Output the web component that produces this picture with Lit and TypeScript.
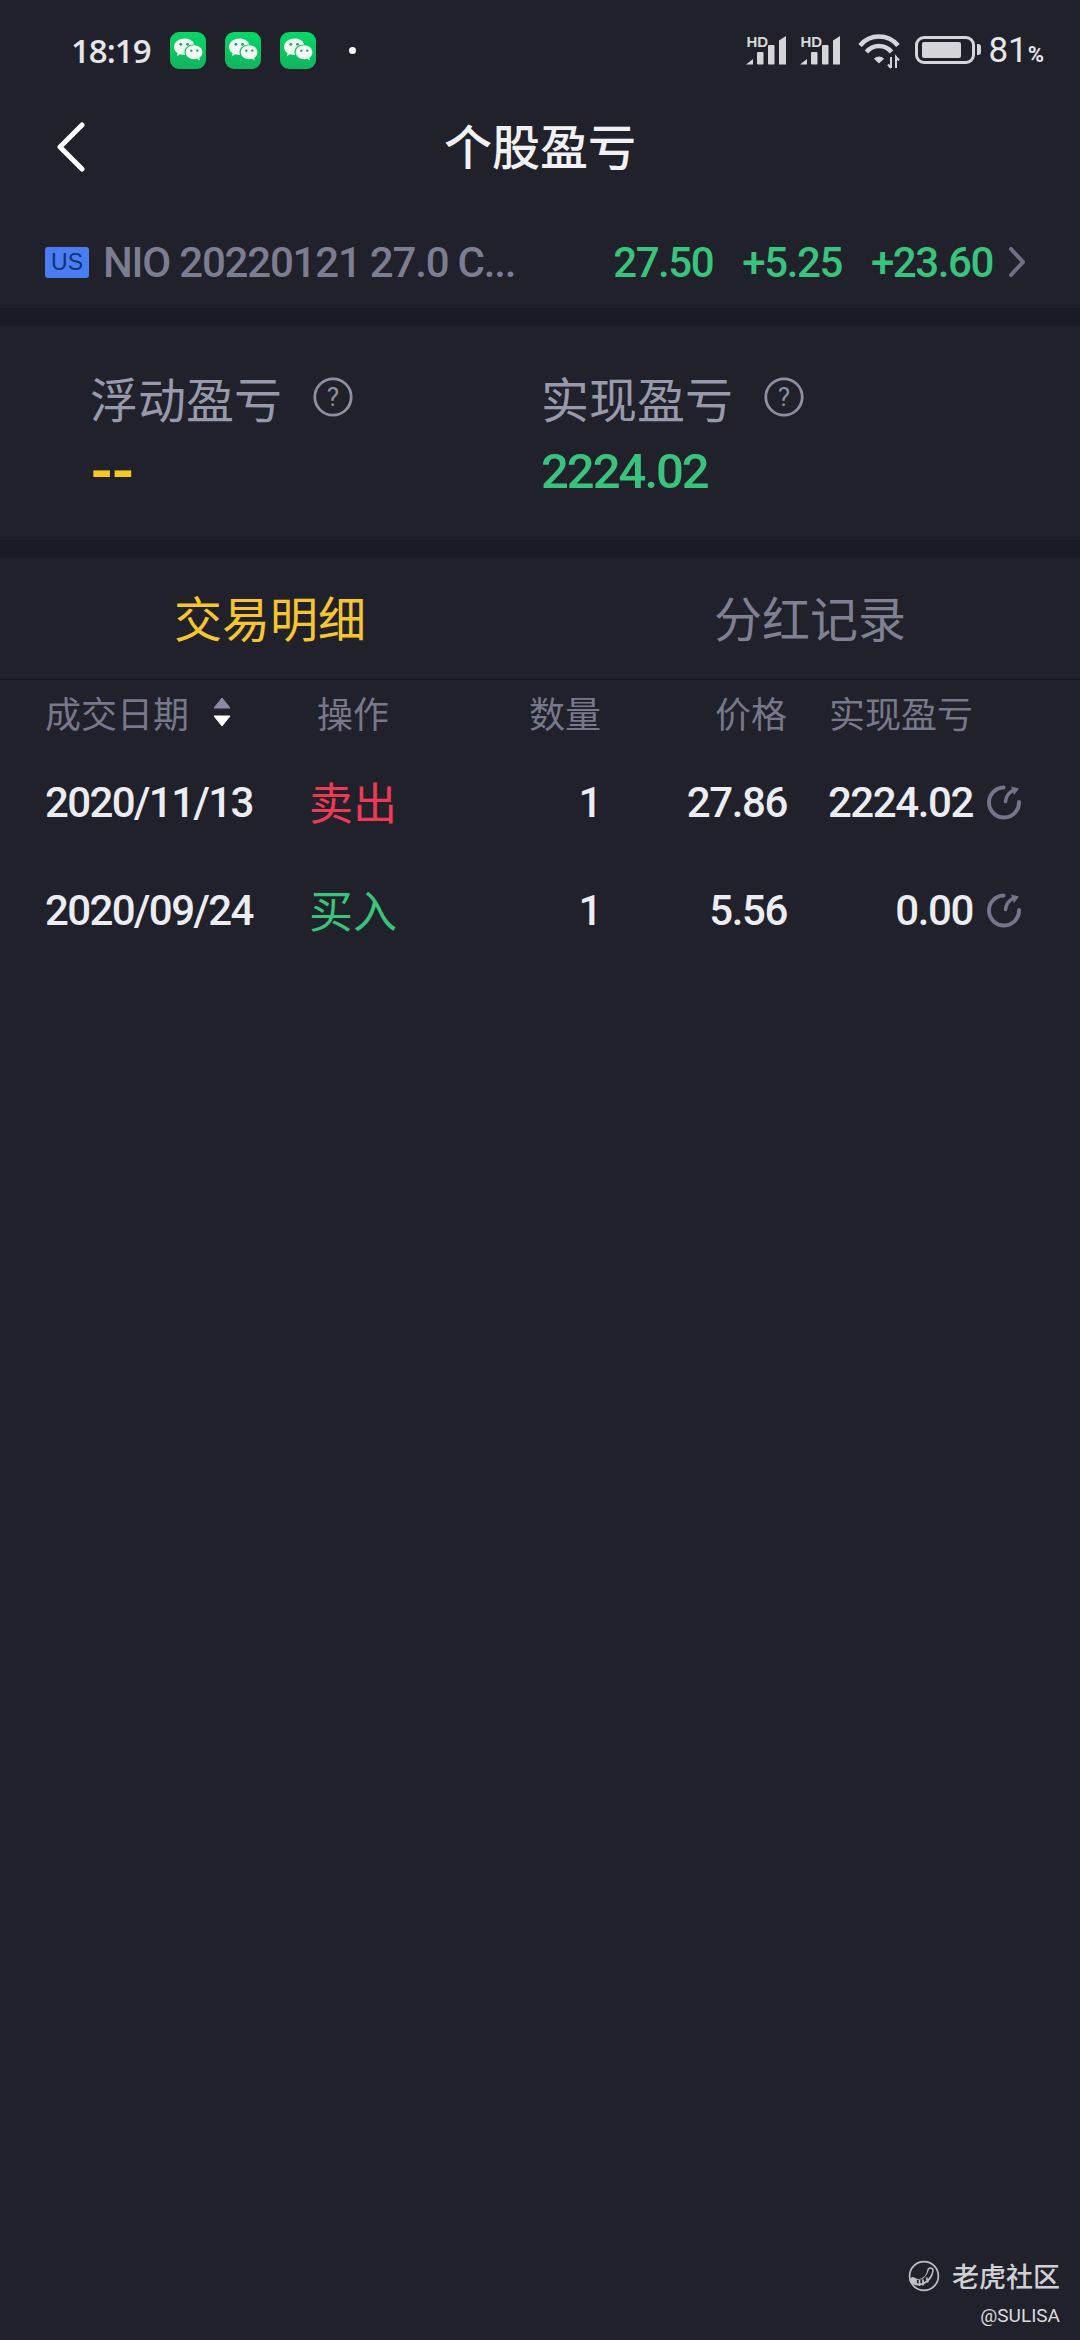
import { LitElement, html, css } from "lit";
import { customElement } from "lit/decorators.js";

const wechat = html`<svg class="wx" viewBox="0 0 36 37">
  <defs><linearGradient id="wxg" x1="0" y1="0" x2="0" y2="1"><stop offset="0" stop-color="#06d867"/><stop offset="1" stop-color="#12b45e"/></linearGradient></defs>
  <rect width="36" height="37" rx="9" fill="url(#wxg)"/>
  <path d="M14.500 6.500c-6 0-10.500 3.800-10.500 8.500 0 2.600 1.400 4.700 3.600 6.200l-.7 2.900 3.200-1.800c1.300.4 2.800.6 4.200.6l.8 0c-.4-1-.6-1.900-.6-2.900 0-4.300 4-7.600 9-7.600l.6 0C23.600 9 19.300 6.500 14.500 6.500z" fill="#eefaf2"/>
  <path d="M24.300 13.200c-4.700 0-8.600 3.100-8.600 7s3.900 7 8.600 7c1 0 2-.1 2.900-.4l2.700 1.600-.6-2.600c1.900-1.300 3.100-3.300 3.100-5.600 0-3.900-3.600-7-8.100-7z" fill="#eefaf2"/>
  <circle cx="10.800" cy="12.300" r="1.400" fill="#2d9a62"/><circle cx="17.500" cy="12.300" r="1.400" fill="#2d9a62"/>
  <circle cx="21.300" cy="18.600" r="1.200" fill="#2d9a62"/><circle cx="27.300" cy="18.600" r="1.200" fill="#2d9a62"/>
</svg>`;

const signal = html`<span class="sig"><span class="hd">HD</span><svg viewBox="0 0 42 30" class="sigbars">
  <path d="M1 29.500 8 24V29.500z" fill="#d6d6da"/><rect x="12" y="17" width="6.500" height="12.500" rx="1" fill="#d6d6da"/><rect x="23" y="10" width="6.500" height="19.500" rx="1" fill="#d6d6da"/><path d="M34 5.500 41 1V29.500H34z" fill="#d6d6da"/>
</svg></span>`;

const wifi = html`<svg class="wifi" viewBox="0 0 42 35" fill="none" stroke="#d6d6da">
  <path d="M2 11.500C12-.5 30-.5 40 11.500" stroke-width="4.500"/>
  <path d="M8.500 18C15 10 27 10 33.500 18" stroke-width="4.500"/>
  <path d="M16 24.800 21 29.500 26 24.800C23 21.800 19 21.800 16 24.800z" fill="#d6d6da" stroke="none"/>
  <path d="M33 23v11M33 34l-3-3.500M38 34V23l3 3.500" stroke-width="2"/>
</svg>`;

const help = html`<svg class="help" viewBox="0 0 40 40"><circle cx="20" cy="20" r="18.200" fill="none" stroke="#8f909f" stroke-width="2.800"/><text x="20" y="29" text-anchor="middle" class="helpq">?</text></svg>`;

const refresh = html`<svg class="refresh" viewBox="0 0 36 36" fill="none" stroke="#74758a" stroke-width="4" stroke-linecap="round">
  <path d="M17.500 3.500A15 15 0 1 0 33 18" />
  <path d="M19.500 17.500C20 12.500 23 8.500 27 6.500" stroke-width="3.600"/>
  <path d="M25 2.500 33 4.500 28 11z" fill="#74758a" stroke="none"/>
</svg>`;

const logo = html`<svg class="logo" viewBox="0 0 32 32" fill="none" stroke="#bfc0c4">
  <circle cx="16" cy="16" r="14.400" stroke-width="1.700"/>
  <path d="M5 20.500C12 25 21 20 22.500 10.500" stroke-width="6.500" stroke-linecap="round"/>
  <path d="M10 21.500C15 22.500 21 17 22.500 10.500" stroke="#20212b" stroke-width="3.600" stroke-linecap="round"/>
  <path d="M8 19v6M11.500 20v6M15 19.500v6M18.500 17.500l1.500 5" stroke="#bfc0c4" stroke-width="1.700"/>
</svg>`;

@customElement("app-root")
export class AppRoot extends LitElement {
  static styles = css`
    :host {
      display: block;
      width: 1080px;
      height: 2340px;
      background: #20212b;
      color: #ecedf2;
      font-family: "Noto Sans CJK SC", sans-serif;
      position: relative;
      overflow: hidden;
    }
    .num { font-family: Roboto, "Noto Sans CJK SC", sans-serif; font-weight: 500; letter-spacing: -1.4px; }

    .status { height: 100px; display: flex; align-items: center; padding: 0 36px 0 71px; box-sizing: border-box; }
    .time { font-family: "Open Sans", sans-serif; font-size: 33px; font-weight: 600; letter-spacing: -1px; color: #e6e6e9; width: 99px; line-height: 1; }
    .wx { width: 36px; height: 37px; margin-right: 19px; display: block; }
    .dot { width: 7px; height: 7px; border-radius: 50%; background: #fff; margin-left: 14px; }
    .status-right { margin-left: auto; display: flex; align-items: center; }
    .sig { position: relative; width: 42px; height: 30px; margin-right: 12px; }
    .sigbars { position: absolute; left: 0; bottom: 0; width: 42px; height: 30px; }
    .hd { position: absolute; left: 1px; top: -1px; font: 700 15px/1 "Liberation Sans", sans-serif; color: #d6d6da; }
    .wifi { width: 42px; height: 35px; margin: 3px 15px 0 5px; display: block; }
    .batt { width: 60px; height: 28px; border: 3.500px solid #d6d6da; border-radius: 9px; box-sizing: border-box; padding: 3px 11px 3px 4px; position: relative; }
    .batt i { display: block; height: 100%; background: #d6d6da; border-radius: 2px; }
    .batt::after { content: ""; position: absolute; right: -9px; top: 5px; width: 4px; height: 11px; background: #d6d6da; border-radius: 0 3px 3px 0; }
    .pct { margin-left: 13px; font-family: Roboto, sans-serif; font-size: 35px; color: #e6e6e9; line-height: 1; }
    .pct small { font-size: 22px; font-weight: 700; margin-left: 0; }

    .nav { height: 94px; position: relative; display: flex; align-items: flex-start; justify-content: center; }
    .back { position: absolute; left: 56px; top: 22px; width: 32px; height: 50px; }
    .title { font-size: 48px; font-weight: 500; color: #f1f1f4; line-height: 1; margin-top: 20px; }

    .quote { height: 46px; padding: 45px 0 23px 45px; display: flex; align-items: center; font-size: 42px; }
    .us { width: 44px; height: 31px; background: #4a7df2; border-radius: 3px; color: #123077; font: 400 23px/31px "Liberation Sans", sans-serif; text-align: center; margin-right: 14px; }
    .sym { color: #7c7d90; flex: 1; letter-spacing: -1.2px; }
    .up { color: #38c47c; }
    .quote .up { margin-right: 29px; }
    .quote .up.last { margin-right: 16px; }
    .chev { width: 16px; height: 30px; margin-right: 55px; display: block; }

    .band { height: 18px; background: #1a1b25; }

    .summary { height: 214px; box-sizing: border-box; padding: 41px 0 0 90px; display: grid; grid-template-columns: 451px 1fr; }
    .label { display: flex; align-items: center; font-size: 48px; line-height: 60px; color: #989aac; }
    .help { width: 40px; height: 40px; margin-left: 31px; }
    .helpq { font: 400 26px "Roboto", sans-serif; fill: #8f909f; }
    .value { font-size: 49px; line-height: 60px; margin-top: 15px; letter-spacing: -2px; }
    .value.dash { font-size: 60px; font-weight: 700; letter-spacing: -2.500px; }
    .yellow { color: #f5c823; }

    .tabs { height: 122px; box-sizing: border-box; padding-bottom: 6px; border-bottom: 1px solid #14151d; display: grid; grid-template-columns: 540px 1fr; align-items: center; text-align: center; font-size: 48px; }
    .tab-on { color: #f7c52c; }
    .tab-off { color: #7f8092; }

    .row { display: grid; grid-template-columns: 205px 206px 145px 186px 186px 1fr; padding-left: 45px; align-items: center; }
    .head { height: 64px; margin-bottom: 4px; font-size: 36px; color: #777889; }
    .cell-r { text-align: right; }
    .cell-c { text-align: center; }
    .sortable { display: flex; align-items: center; }
    .sort { width: 18px; height: 30px; margin-left: 24px; }
    .item { height: 108px; font-size: 42px; }
    .date { letter-spacing: -1.6px; }
    .op { font-size: 44px; text-align: center; padding-bottom: 3px; }
    .red { color: #ee3a55; }
    .refresh { width: 36px; height: 36px; margin-left: 13px; display: block; }

    .mark { position: absolute; right: 20px; bottom: 12px; display: flex; flex-direction: column; align-items: flex-end; }
    .mark-top { display: flex; align-items: center; gap: 12px; font-size: 27px; font-weight: 500; color: #cfd0d3; line-height: 36px; }
    .logo { width: 32px; height: 32px; }
    .mark-sub { font: 400 19px/24px Roboto, sans-serif; color: #dcdcdf; margin-top: 10px; }
  `;

  render() {
    const rows = [
      { date: "2020/11/13", op: "卖出", cls: "red", qty: "1", price: "27.86", pnl: "2224.02" },
      { date: "2020/09/24", op: "买入", cls: "up", qty: "1", price: "5.56", pnl: "0.00" },
    ];
    return html`
      <div class="status">
        <span class="time">18:19</span>
        ${wechat}${wechat}${wechat}
        <span class="dot"></span>
        <div class="status-right">
          ${signal}${signal}${wifi}
          <div class="batt"><i></i></div>
          <span class="pct">81<small>%</small></span>
        </div>
      </div>

      <div class="nav">
        <svg class="back" viewBox="0 0 32 50" fill="none" stroke="#fff" stroke-width="5" stroke-linecap="round" stroke-linejoin="round"><path d="M26 3 4 25 26 47"/></svg>
        <span class="title">个股盈亏</span>
      </div>

      <div class="quote">
        <span class="us">US</span>
        <span class="sym num">NIO 20220121 27.0 C...</span>
        <span class="up num">27.50</span>
        <span class="up num">+5.25</span>
        <span class="up num last">+23.60</span>
        <svg class="chev" viewBox="0 0 16 30" fill="none" stroke="#6f7086" stroke-width="4" stroke-linecap="round"><path d="M2 2 14 15 2 28"/></svg>
      </div>
      <div class="band"></div>

      <div class="summary">
        <div>
          <div class="label">浮动盈亏${help}</div>
          <div class="value dash num yellow">--</div>
        </div>
        <div>
          <div class="label">实现盈亏${help}</div>
          <div class="value num up">2224.02</div>
        </div>
      </div>
      <div class="band"></div>

      <div class="tabs">
        <span class="tab-on">交易明细</span>
        <span class="tab-off">分红记录</span>
      </div>

      <div class="row head">
        <div class="sortable">成交日期
          <svg class="sort" viewBox="0 0 18 30"><path d="M9 1 17 11H1z" fill="#8a8ba5" stroke="#8a8ba5" stroke-linejoin="round"/><path d="M9 29 17 19H1z" fill="#fff" stroke="#fff" stroke-linejoin="round"/></svg>
        </div>
        <div class="cell-c">操作</div>
        <div class="cell-r">数量</div>
        <div class="cell-r">价格</div>
        <div class="cell-r">实现盈亏</div>
        <div></div>
      </div>
      ${rows.map(
        (r) => html`<div class="row item">
          <div class="num date">${r.date}</div>
          <div class="op ${r.cls}">${r.op}</div>
          <div class="cell-r num">${r.qty}</div>
          <div class="cell-r num">${r.price}</div>
          <div class="cell-r num">${r.pnl}</div>
          <div>${refresh}</div>
        </div>`
      )}

      <div class="mark">
        <div class="mark-top">${logo}<span>老虎社区</span></div>
        <div class="mark-sub">@SULISA</div>
      </div>
    `;
  }
}
